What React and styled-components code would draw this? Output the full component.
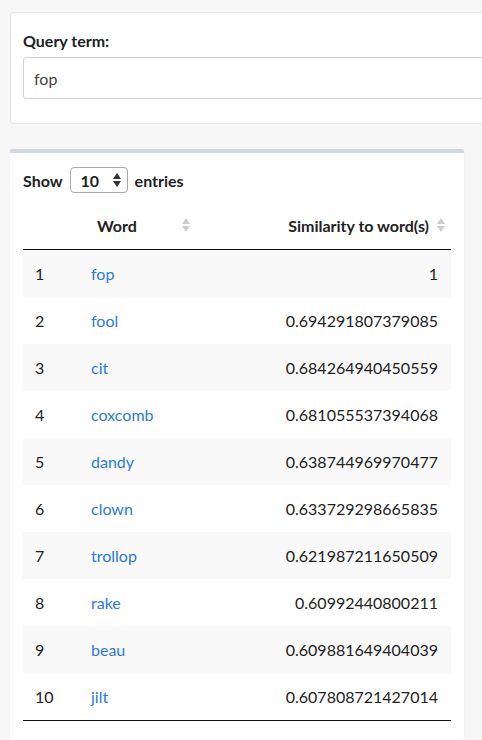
import React from "react";
import styled, { createGlobalStyle } from "styled-components";

const Global = createGlobalStyle`
  body { margin:0; background:#f7f7f7; font-family: Lato, "Open Sans", sans-serif; color:#222; }
`;
const Page = styled.div`padding:12px 0 0 10px; display:flex; flex-direction:column; gap:25px; overflow:hidden; width:472px;`;
const Panel1 = styled.div`background:#fff; border:1px solid #e6e6e6; border-radius:3px; padding:18px 0 24px 12px; width:500px;`;
const Label = styled.div`font-weight:700; font-size:16px; margin-bottom:7px;`;
const Input = styled.div`height:40px; border:1px solid #d2d2d2; border-radius:3px; display:flex; align-items:center; padding-left:10px; font-size:16px; color:#444;`;
const Panel2 = styled.div`background:#fff; border-top:4px solid #d2d6de; border-radius:3px; width:454px; padding:14px 0 20px 13px; box-sizing:border-box; box-shadow:0 0 1px rgba(0,0,0,0.15);`;
const ShowRow = styled.div`display:flex; align-items:center; gap:5px; font-weight:700; font-size:16px; margin-bottom:8px;`;
const Select = styled.div`width:58px; height:26px; border:1px solid #aaa; border-radius:4px; display:flex; align-items:center; justify-content:space-between; padding:0 6px 0 10px; box-sizing:border-box; font-size:16px; margin:0 2px;`;
const Table = styled.table`width:428px; border-collapse:collapse; font-size:16px; border-bottom:1px solid #111;`;
const Th = styled.th`height:48px; border-bottom:1.5px solid #111; font-weight:700; text-align:${p=>p.$right?"right":"left"}; padding:0 ${p=>p.$pr||12}px 0 ${p=>p.$pl||12}px;`;
const Tr = styled.tr`background:${p=>p.$odd?"#f9f9f9":"#fff"}; & + & td { border-top:1px solid #ddd; }`;
const Td = styled.td`height:47px; padding:0 13px 0 12px; text-align:${p=>p.$right?"right":"left"};`;
const Link = styled.span`color:#2a7ae2; padding-left:2px;`;
const HeadInner = styled.div`display:flex; align-items:center; justify-content:${p=>p.$right?"flex-end":"space-between"}; gap:8px;`;

const Sort = ({c="#ccc"}) => (
  <svg width="8" height="16" viewBox="0 0 8 16"><path d="M4 1L8 7H0Z" fill={c}/><path d="M4 15L8 9H0Z" fill={c}/></svg>
);

const rows = [["fop","1"],["fool","0.694291807379085"],["cit","0.684264940450559"],["coxcomb","0.681055537394068"],["dandy","0.638744969970477"],["clown","0.633729298665835"],["trollop","0.621987211650509"],["rake","0.60992440800211"],["beau","0.609881649404039"],["jilt","0.607808721427014"]];

export default function App(){
  return (<>
    <Global/>
    <Page>
      <Panel1>
        <Label>Query term:</Label>
        <Input>fop</Input>
      </Panel1>
      <Panel2>
        <ShowRow>Show <Select>10 <Sort c="#333"/></Select> entries</ShowRow>
        <Table>
          <thead><tr>
            <Th style={{width:30}}></Th>
            <Th $pl={10}><HeadInner><span style={{paddingLeft:10}}>Word</span><Sort/></HeadInner></Th>
            <Th $right $pr={6}><HeadInner $right>Similarity to word(s)<Sort/></HeadInner></Th>
          </tr></thead>
          <tbody>
            {rows.map(([w,v],i)=>(
              <Tr key={i} $odd={i%2===0}>
                <Td>{i+1}</Td>
                <Td><Link>{w}</Link></Td>
                <Td $right>{v}</Td>
              </Tr>
            ))}
          </tbody>
        </Table>
      </Panel2>
    </Page>
  </>);
}
